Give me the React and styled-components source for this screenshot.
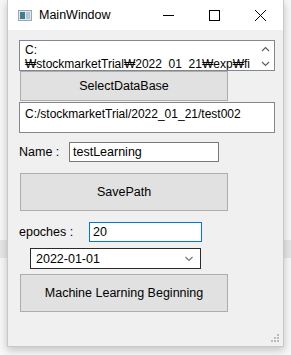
import styled, { createGlobalStyle } from "styled-components";

const Global = createGlobalStyle`
  html, body {
    margin: 0;
    padding: 0;
    background: #f7f7f7;
    font-family: "Liberation Sans", "Noto Sans CJK KR", sans-serif;
  }
`;

// desktop behind the window
const Desktop = styled.div`
  position: relative;
  width: 291px;
  height: 355px;
  overflow: hidden;
  background: #f7f7f7;
  padding-left: 7px;
  box-sizing: border-box;
`;

const BackBand = styled.div`
  position: absolute;
  left: 0;
  right: 0;
  top: ${(p) => p.top}px;
  height: ${(p) => p.h}px;
  background: ${(p) => p.bg};
`;

const Window = styled.div`
  position: relative;
  width: 277px;
  height: 347px;
  background: #f0f0f0;
  border: 1px solid #c9c9c9;
  border-top: none;
  box-sizing: border-box;
  box-shadow: 0 3px 8px rgba(0, 0, 0, 0.22);
  display: flex;
  flex-direction: column;
  font-size: 12px;
  color: #000;
`;

const TitleBar = styled.div`
  height: 30px;
  background: #fff;
  display: flex;
  align-items: center;
  padding-left: 10px;
  flex-shrink: 0;
`;

const Title = styled.span`
  margin-left: 7px;
  font-size: 12.5px;
  flex: 1;
`;

const Ctrl = styled.div`
  width: 46px;
  height: 30px;
  display: flex;
  align-items: center;
  justify-content: center;
`;

const Content = styled.div`
  display: flex;
  flex-direction: column;
  align-items: flex-start;
  padding: 10px 0 0 10px;
  flex: 1;
`;

const TextBox = styled.div`
  width: 256px;
  height: ${(p) => p.h}px;
  margin-left: 1px;
  margin-top: ${(p) => p.mt || 0}px;
  background: #fff;
  border: 1px solid #828790;
  box-sizing: border-box;
  display: flex;
  overflow: hidden;
`;

const TextArea = styled.div`
  flex: 1;
  padding: ${(p) => p.pt || 2}px 0 0 5px;
  font-size: 12px;
  line-height: 14px;
  white-space: nowrap;
  overflow: hidden;
`;

const ScrollCol = styled.div`
  width: 17px;
  display: flex;
  flex-direction: column;
  align-items: center;
  justify-content: space-between;
  padding: 5px 0 3px;
`;

const Button = styled.div`
  width: 208px;
  height: ${(p) => p.h}px;
  margin-left: 2px;
  margin-top: ${(p) => p.mt || 0}px;
  background: #e1e1e1;
  border: 1px solid #adadad;
  box-sizing: border-box;
  display: flex;
  align-items: center;
  justify-content: center;
  font-size: 12.5px;
`;

const Row = styled.div`
  display: flex;
  align-items: center;
  margin-top: ${(p) => p.mt}px;
  margin-left: 1px;
`;

const Label = styled.span`
  width: ${(p) => p.w}px;
  font-size: 12.5px;
`;

const Input = styled.div`
  width: ${(p) => p.w}px;
  height: ${(p) => p.h}px;
  background: #fff;
  border: 1px solid ${(p) => (p.focus ? "#0078d7" : "#7a7a7a")};
  box-sizing: border-box;
  display: flex;
  align-items: center;
  padding-left: 3px;
  font-size: 12.5px;
`;

const Combo = styled.div`
  width: 171px;
  height: 21px;
  margin: 6px 0 0 12px;
  background: #fff;
  border: 1px solid #2b2b2b;
  box-sizing: border-box;
  display: flex;
  align-items: center;
  justify-content: space-between;
  padding: 0 6px 0 5px;
  font-size: 12.5px;
`;

const Grip = styled.svg`
  position: absolute;
  right: 4px;
  bottom: 4px;
`;

const Chevron = ({ up, color = "#606060", w = 9 }) => (
  <svg width={w} height="6" viewBox="0 0 9 6">
    <polyline
      points={up ? "1,5 4.5,1.5 8,5" : "1,1 4.5,4.5 8,1"}
      fill="none"
      stroke={color}
      strokeWidth="1.2"
    />
  </svg>
);

export default function App() {
  return (
    <>
      <Global />
      <Desktop>
        <BackBand top={240} h={18} bg="#e6e6e6" />
        <Window>
          <TitleBar>
            <svg width="14" height="11" viewBox="0 0 14 11">
              <rect x="0.5" y="0.5" width="13" height="10" fill="#dfe8ee" stroke="#9aa7b0" />
              <rect x="2" y="2" width="5" height="7" fill="#3f7f8f" />
              <rect x="8" y="2" width="4" height="7" fill="#b8c8d2" />
            </svg>
            <Title>MainWindow</Title>
            <Ctrl>
              <svg width="11" height="11" viewBox="0 0 11 11">
                <line x1="0" y1="5.5" x2="11" y2="5.5" stroke="#000" />
              </svg>
            </Ctrl>
            <Ctrl>
              <svg width="11" height="11" viewBox="0 0 11 11">
                <rect x="0.5" y="0.5" width="10" height="10" fill="none" stroke="#000" />
              </svg>
            </Ctrl>
            <Ctrl>
              <svg width="11" height="11" viewBox="0 0 11 11">
                <line x1="0" y1="0" x2="11" y2="11" stroke="#000" />
                <line x1="11" y1="0" x2="0" y2="11" stroke="#000" />
              </svg>
            </Ctrl>
          </TitleBar>
          <Content>
            <TextBox h={31}>
              <TextArea>
                C:
                <br />
                ₩stockmarketTrial₩2022_01_21₩exp₩fi
              </TextArea>
              <ScrollCol>
                <Chevron up />
                <Chevron />
              </ScrollCol>
            </TextBox>
            <Button h={30}>SelectDataBase</Button>
            <TextBox h={31} mt={1}>
              <TextArea pt={4}>C:/stockmarketTrial/2022_01_21/test002</TextArea>
            </TextBox>
            <Row mt={9}>
              <Label w={50}>Name :</Label>
              <Input w={150} h={20}>testLearning</Input>
            </Row>
            <Button h={38} mt={11}>SavePath</Button>
            <Row mt={11}>
              <Label w={70}>epoches :</Label>
              <Input w={113} h={20} focus>20</Input>
            </Row>
            <Combo>
              <span>2022-01-01</span>
              <Chevron color="#777" w={10} />
            </Combo>
            <Button h={38} mt={5}>Machine Learning Beginning</Button>
          </Content>
          <Grip width="8" height="8" viewBox="0 0 8 8">
            {[[6, 0], [6, 3], [3, 3], [6, 6], [3, 6], [0, 6]].map(([x, y], i) => (
              <rect key={i} x={x} y={y} width="2" height="2" fill="#bcbcbc" />
            ))}
          </Grip>
        </Window>
      </Desktop>
    </>
  );
}
